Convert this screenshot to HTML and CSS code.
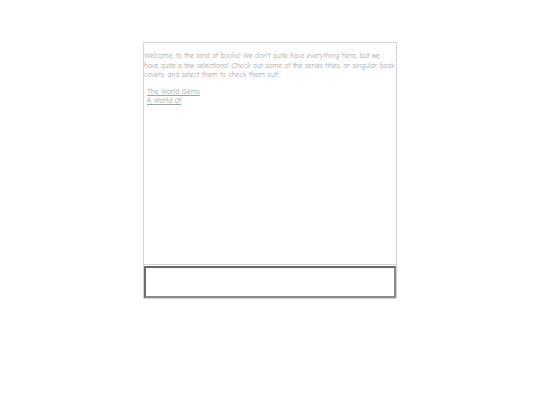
FILE: index.html
```html
<!DOCTYPE html>
<html>
<head>
<meta charset="utf-8">
<link rel="stylesheet" href="styles.css">
</head>
<body>
<div class="frame">
  <div class="content">
    <p class="intro">Welcome, to the land of books! We don`t quite have <em>everything</em> here, but we<br>have quite a few selections! <em>Check</em> out some of the series titles, or singular book<br>covers, and select them to check them out!</p>
    <ul class="list">
      <li><a href="#">The World Gems</a></li>
      <li><a href="#">A World Of</a></li>
    </ul>
  </div>
  <div class="panel"></div>
</div>
</body>
</html>
```
FILE: styles.css
```css
html, body {
  margin: 0;
  padding: 0;
  background: #fff;
}
body {
  font-family: "Comic Sans MS", "Comic Neue", "DejaVu Sans", sans-serif;
  color: #a8a8a8;
}
.frame {
  margin: 42px 0 0 143px;
  width: 252px;
  border: 1px solid #d4d4d4;
}
.content {
  box-sizing: border-box;
  height: 222px;
  padding-top: 8px;
  border-bottom: 1px solid #d4d4d4;
}
.intro {
  margin: 0;
  font-size: 7.35px;
  line-height: 9.6px;
  white-space: nowrap;
}
.list {
  list-style: none;
  margin: 7px 0 0 3px;
  padding: 0;
  font-size: 7.35px;
  line-height: 9.6px;
}
.list a {
  color: #9aa8a0;
  text-decoration: underline;
}
.panel {
  height: 28px;
  margin-top: 1px;
  border: 2px solid #6a6a6a;
  border-bottom-color: #8a8a8a;
  border-right-color: #8a8a8a;
}
```
